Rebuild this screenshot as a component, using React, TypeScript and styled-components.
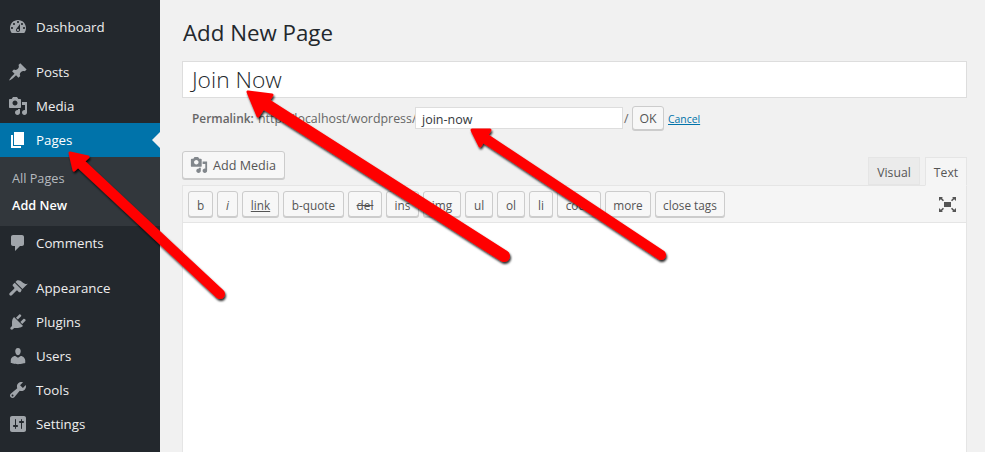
import React from 'react';
import styled, { createGlobalStyle } from 'styled-components';

const GlobalStyle = createGlobalStyle`
	html, body {
		margin: 0;
		height: 100%;
		overflow: hidden;
		background: #f1f1f1;
		font-family: 'Open Sans', 'Noto Sans', sans-serif;
		font-size: 13px;
		color: #444;
	}
`;

const icons: Record<string, string> = {
	dashboard:
		'M3.76 16h12.48c1.1-1.37 1.76-3.11 1.76-5 0-4.42-3.58-8-8-8s-8 3.58-8 8c0 1.89.66 3.63 1.76 5zM10 4c.55 0 1 .45 1 1s-.45 1-1 1-1-.45-1-1 .45-1 1-1zM6 6c.55 0 1 .45 1 1s-.45 1-1 1-1-.45-1-1 .45-1 1-1zm8 0c.55 0 1 .45 1 1s-.45 1-1 1-1-.45-1-1 .45-1 1-1zm-5.37 5.55L12 7v6c0 1.1-.9 2-2 2s-2-.9-2-2c0-.57.24-1.08.63-1.45zM4 10c.55 0 1 .45 1 1s-.45 1-1 1-1-.45-1-1 .45-1 1-1zm12 0c.55 0 1 .45 1 1s-.45 1-1 1-1-.45-1-1 .45-1 1-1zm-5 3c0-.55-.45-1-1-1s-1 .45-1 1 .45 1 1 1 1-.45 1-1z',
	post: 'M10.44 3.02l1.82-1.82 6.36 6.35-1.83 1.82c-1.05-.68-2.48-.57-3.41.36l-.75.75c-.92.93-1.04 2.35-.35 3.41l-1.83 1.82-2.41-2.41-2.8 2.79c-.42.42-3.38 2.71-3.8 2.29s1.86-3.39 2.28-3.81l2.79-2.79L4.1 9.36l1.83-1.82c1.05.69 2.48.57 3.4-.36l.75-.75c.93-.92 1.05-2.35.36-3.41z',
	media:
		'M13 11V4c0-.55-.45-1-1-1h-1.67L9 1H5L3.67 3H2c-.55 0-1 .45-1 1v7c0 .55.45 1 1 1h10c.55 0 1-.45 1-1zM7 4.5c1.38 0 2.5 1.12 2.5 2.5S8.38 9.5 7 9.5 4.5 8.38 4.5 7 5.62 4.5 7 4.5zM14 6h5v10.5c0 1.38-1.12 2.5-2.5 2.5S14 17.88 14 16.5s1.12-2.5 2.5-2.5c.17 0 .34.02.5.05V9h-3V6zm-4 8.05V13h2v3.5c0 1.38-1.12 2.5-2.5 2.5S7 17.88 7 16.5 8.12 14 9.5 14c.17 0 .34.02.5.05z',
	page: 'M6 15V2h10v13H6zm-1 1h8v2H3V5h2v11z',
	comments: 'M5 2h9c1.1 0 2 .9 2 2v7c0 1.1-.9 2-2 2h-2l-5 5v-5H5c-1.1 0-2-.9-2-2V4c0-1.1.9-2 2-2z',
	appearance:
		'M14.48 11.06L7.41 3.99l1.5-1.5c.5-.56 2.3-.47 3.51.32 1.21.8 1.43 1.28 2.91 2.1 1.18.64 2.45 1.26 4.45.85zm-.71.71L6.7 4.77 5.09 6.3c-.59.56-.59 1.46 0 2.02l1.06 1.02c.39.38.39 1 0 1.38l-4.4 4.4c-.59.59-.59 1.54 0 2.12.59.59 1.53.59 2.12 0l4.4-4.4c.38-.39 1-.39 1.38 0l1.02 1.06c.56.59 1.46.59 2.02 0z',
	plugins:
		'M13.11 4.36L9.87 7.6 8 5.73l3.24-3.24c.35-.34 1.05-.2 1.56.32.52.51.66 1.21.31 1.55zm-8 1.77l.91-1.12 9.01 9.01-1.19.84c-.71.71-2.63 1.16-3.82 1.16H6.14L4.9 17.26c-.59.59-1.54.59-2.12 0-.59-.58-.59-1.53 0-2.12l1.24-1.24v-3.88c0-1.13.4-3.19 1.09-3.89zm7.26 3.97l3.24-3.24c.34-.35 1.04-.21 1.55.31.52.51.66 1.21.31 1.55l-3.24 3.25z',
	users:
		'M10 9.25c-2.27 0-2.73-3.44-2.73-3.44C7 4.02 7.82 2 9.97 2c2.16 0 2.98 2.02 2.71 3.81 0 0-.41 3.44-2.68 3.44zm0 2.57L12.72 10c2.39 0 4.52 2.33 4.52 4.53v2.49s-3.65 1.13-7.24 1.13c-3.65 0-7.24-1.13-7.24-1.13v-2.49c0-2.25 1.94-4.48 4.47-4.48z',
	tools:
		'M16.68 9.77c-1.34 1.34-3.3 1.67-4.95.99l-5.41 6.52c-.99.99-2.59.99-3.58 0s-.99-2.59 0-3.57l6.52-5.42c-.68-1.65-.35-3.61.99-4.95 1.28-1.28 3.12-1.62 4.72-1.06l-2.89 2.89 2.82 2.82 2.86-2.87c.53 1.58.18 3.39-1.08 4.65zM3.81 16.21c.4.39 1.04.39 1.43 0 .4-.4.4-1.04 0-1.43-.39-.4-1.03-.4-1.43 0-.39.39-.39 1.03 0 1.43z',
	settings:
		'M18 16V4c0-1.1-.9-2-2-2H4c-1.1 0-2 .9-2 2v12c0 1.1.9 2 2 2h12c1.1 0 2-.9 2-2zM8 11h1c.55 0 1 .45 1 1s-.45 1-1 1H8v1.5c0 .28-.22.5-.5.5s-.5-.22-.5-.5V13H6c-.55 0-1-.45-1-1s.45-1 1-1h1V5.5c0-.28.22-.5.5-.5s.5.22.5.5V11zm5-2h-1c-.55 0-1-.45-1-1s.45-1 1-1h1V5.5c0-.28.22-.5.5-.5s.5.22.5.5V7h1c.55 0 1 .45 1 1s-.45 1-1 1h-1v5.5c0 .28-.22.5-.5.5s-.5-.22-.5-.5V9z',
};

const Dashicon: React.FC<{ name: string; size?: number }> = ({ name, size = 20 }) => (
	<svg width={size} height={size} viewBox='0 0 20 20' fill='currentColor'>
		<path d={icons[name]} />
	</svg>
);

type MenuEntry = { icon: string; label: string; gapBefore?: boolean };

const topMenu: MenuEntry[] = [
	{ icon: 'dashboard', label: 'Dashboard' },
	{ icon: 'post', label: 'Posts', gapBefore: true },
	{ icon: 'media', label: 'Media' },
];

const lowerMenu: MenuEntry[] = [
	{ icon: 'comments', label: 'Comments' },
	{ icon: 'appearance', label: 'Appearance', gapBefore: true },
	{ icon: 'plugins', label: 'Plugins' },
	{ icon: 'users', label: 'Users' },
	{ icon: 'tools', label: 'Tools' },
	{ icon: 'settings', label: 'Settings' },
];

const quickTags = [
	{ label: 'b', width: 25 },
	{ label: 'i', width: 21 },
	{ label: 'link', width: 37 },
	{ label: 'b-quote', width: 61 },
	{ label: 'del', width: 34 },
	{ label: 'ins', width: 33 },
	{ label: 'img', width: 38 },
	{ label: 'ul', width: 28 },
	{ label: 'ol', width: 28 },
	{ label: 'li', width: 24 },
	{ label: 'code', width: 44 },
	{ label: 'more', width: 46 },
	{ label: 'close tags', width: 70 },
];

const App: React.FC = () => (
	<Page>
		<GlobalStyle />
		<Sidebar>
			{topMenu.map((item) => (
				<MenuItem key={item.label} $gap={item.gapBefore}>
					<MenuIcon>
						<Dashicon name={item.icon} />
					</MenuIcon>
					{item.label}
				</MenuItem>
			))}
			<ActiveItem>
				<CurrentIcon>
					<Dashicon name='page' />
				</CurrentIcon>
				Pages
			</ActiveItem>
			<SubMenu>
				<SubItem>All Pages</SubItem>
				<SubItem $current>Add New</SubItem>
			</SubMenu>
			{lowerMenu.map((item) => (
				<MenuItem key={item.label} $gap={item.gapBefore}>
					<MenuIcon>
						<Dashicon name={item.icon} />
					</MenuIcon>
					{item.label}
				</MenuItem>
			))}
		</Sidebar>
		<Content>
			<Heading>Add New Page</Heading>
			<TitleField>Join Now</TitleField>
			<PermalinkRow>
				<PermalinkLabel>Permalink:</PermalinkLabel>
				<PermalinkBase>http://localhost/wordpress/</PermalinkBase>
				<SlugField>join-now</SlugField>
				<Slash>/</Slash>
				<OkButton>OK</OkButton>
				<CancelLink>Cancel</CancelLink>
			</PermalinkRow>
			<EditorHead>
				<MediaButton>
					<Dashicon name='media' size={18} />
					Add Media
				</MediaButton>
				<Tabs>
					<Tab>Visual</Tab>
					<Tab $active>Text</Tab>
				</Tabs>
			</EditorHead>
			<Toolbar>
				{quickTags.map((tag) => (
					<TagButton key={tag.label} $tag={tag.label} $width={tag.width}>
						{tag.label}
					</TagButton>
				))}
				<FullscreenIcon width='17' height='15' viewBox='0 0 17 15' fill='#555'>
					<path d='M5 5h7v5H5z' />
					<path d='M0 0h4L2.9 1.1 5 3.2 3.9 4.3 1.8 2.2 0 4zM17 0v4l-1.8-1.8-2.1 2.1L12 3.2l2.1-2.1L13 0zM0 15v-4l1.8 1.8 2.1-2.1L5 11.8l-2.1 2.1L4 15zM17 15h-4l1.1-1.1-2.1-2.1 1.1-1.1 2.1 2.1L17 11z' />
				</FullscreenIcon>
			</Toolbar>
			<EditorBody />
		</Content>
		<ArrowLayer width='985' height='452' viewBox='0 0 985 452'>
			<defs>
				<filter id='arrowShadow' x='-10%' y='-10%' width='120%' height='120%'>
					<feDropShadow dx='1' dy='2' stdDeviation='1.2' floodColor='#000' floodOpacity='0.85' />
				</filter>
			</defs>
			<g filter='url(#arrowShadow)' fill='#ff0000' stroke='#ff0000' strokeLinecap='round' strokeLinejoin='round'>
				<line x1='220' y1='294' x2='82' y2='165' strokeWidth='10' />
				<path d='M70 153 L88 157 L74 170 Z' strokeWidth='3' />
				<line x1='504' y1='256' x2='264' y2='103' strokeWidth='12' />
				<path d='M248 92 L272 95 L258 116 Z' strokeWidth='3' />
				<line x1='661' y1='255' x2='486' y2='139' strokeWidth='10' />
				<path d='M472 130 L490 130 L480 146 Z' strokeWidth='3' />
			</g>
		</ArrowLayer>
	</Page>
);

const Page = styled.div`
	position: relative;
	display: flex;
	width: 985px;
	height: 452px;
	overflow: hidden;
`;
const Sidebar = styled.nav`
	flex: none;
	width: 160px;
	box-sizing: border-box;
	padding-top: 10px;
	background: #23282d;
	color: #eee;
	font-size: 13.3px;
`;
const MenuItem = styled.div<{ $gap?: boolean }>`
	display: flex;
	align-items: center;
	height: 34px;
	margin-top: ${(p) => (p.$gap ? '11px' : '0')};
`;
const MenuIcon = styled.span`
	display: flex;
	justify-content: center;
	width: 36px;
	color: #a0a5aa;
`;
const ActiveItem = styled(MenuItem)`
	position: relative;
	background: #0073aa;
	color: #fff;

	&::after {
		content: '';
		position: absolute;
		right: 0;
		top: 9px;
		border: 8px solid transparent;
		border-right-color: #f1f1f1;
		border-left-width: 0;
	}
`;
const CurrentIcon = styled(MenuIcon)`
	color: #fff;
`;
const SubMenu = styled.div`
	height: 69px;
	box-sizing: border-box;
	padding: 8px 0 0 12px;
	background: #32373c;
	font-size: 12.7px;
`;
const SubItem = styled.div<{ $current?: boolean }>`
	height: 27px;
	line-height: 27px;
	color: ${(p) => (p.$current ? '#fff' : 'rgba(240, 245, 250, 0.7)')};
	font-weight: ${(p) => (p.$current ? 600 : 400)};
`;
const Content = styled.main`
	flex: 1;
	min-width: 0;
	padding: 0 18px 0 22px;
`;
const Heading = styled.h1`
	margin: 0;
	height: 61px;
	box-sizing: border-box;
	padding: 17px 0 0 1px;
	font-size: 22.3px;
	line-height: 31px;
	font-weight: 400;
	color: #23282d;
`;
const TitleField = styled.div`
	height: 37px;
	box-sizing: border-box;
	padding-left: 9px;
	border: 1px solid #ddd;
	background: #fff;
	font-size: 22.8px;
	font-weight: 300;
	line-height: 36px;
	color: #23282d;
`;
const PermalinkRow = styled.div`
	display: flex;
	align-items: center;
	height: 24px;
	margin-top: 8px;
	padding-left: 10px;
	color: #666;
	font-size: 12.4px;
	white-space: nowrap;
`;
const PermalinkLabel = styled.strong`
	width: 66px;
	font-size: 11.9px;
	font-weight: 600;
`;
const PermalinkBase = styled.span`
	width: 157px;
`;
const SlugField = styled.div`
	width: 208px;
	height: 22px;
	box-sizing: border-box;
	padding-left: 6px;
	border: 1px solid #ddd;
	background: #fff;
	font-size: 12.5px;
	line-height: 23px;
	color: #32373c;
`;
const Slash = styled.span`
	width: 8px;
	margin-left: 1px;
`;
const BaseButton = styled.div`
	box-sizing: border-box;
	border: 1px solid #ccc;
	border-radius: 3px;
	background: #f7f7f7;
	box-shadow: 0 1px 0 #ccc;
	color: #555;
	font-size: 12.6px;
	white-space: nowrap;
`;
const OkButton = styled(BaseButton)`
	width: 32px;
	height: 24px;
	text-align: center;
	line-height: 23px;
	font-size: 12.3px;
`;
const CancelLink = styled.span`
	margin-left: 4px;
	padding-top: 1px;
	color: #0073aa;
	font-size: 10.4px;
	text-decoration: underline;
`;
const EditorHead = styled.div`
	display: flex;
	justify-content: space-between;
	align-items: flex-end;
	height: 34px;
	margin-top: 21px;
`;
const MediaButton = styled(BaseButton)`
	align-self: flex-start;
	display: flex;
	align-items: center;
	gap: 5px;
	width: 103px;
	height: 28px;
	padding-left: 7px;
	svg {
		color: #82878c;
	}
`;
const Tabs = styled.div`
	display: flex;
	gap: 5px;
`;
const Tab = styled.div<{ $active?: boolean }>`
	position: relative;
	box-sizing: border-box;
	height: ${(p) => (p.$active ? '29px' : '28px')};
	margin-bottom: ${(p) => (p.$active ? '-1px' : '0')};
	width: ${(p) => (p.$active ? '42px' : '52px')};
	border: 1px solid #e5e5e5;
	border-bottom-color: ${(p) => (p.$active ? '#f5f5f5' : '#e5e5e5')};
	background: ${(p) => (p.$active ? '#f5f5f5' : '#ebebeb')};
	color: #555;
	text-align: center;
	line-height: 29px;
	font-size: 12.2px;
`;
const Toolbar = styled.div`
	display: flex;
	align-items: center;
	gap: 4px;
	height: 38px;
	box-sizing: border-box;
	padding: 0 5px;
	border: 1px solid #e5e5e5;
	background: #f5f5f5;
`;
const TagButton = styled(BaseButton)<{ $tag: string; $width: number }>`
	width: ${(p) => p.$width}px;
	height: 26px;
	margin-bottom: 1px;
	text-align: center;
	line-height: 26px;
	font-size: 11.8px;
	font-style: ${(p) => (p.$tag === 'i' ? 'italic' : 'normal')};
	text-decoration: ${(p) => (p.$tag === 'link' ? 'underline' : p.$tag === 'del' ? 'line-through' : 'none')};
`;
const FullscreenIcon = styled.svg`
	margin-left: auto;
	margin-right: 5px;
`;
const EditorBody = styled.div`
	height: 240px;
	border: 1px solid #e5e5e5;
	border-top: 0;
	background: #fff;
`;
const ArrowLayer = styled.svg`
	position: absolute;
	left: 0;
	top: 0;
	pointer-events: none;
`;

export default App;
